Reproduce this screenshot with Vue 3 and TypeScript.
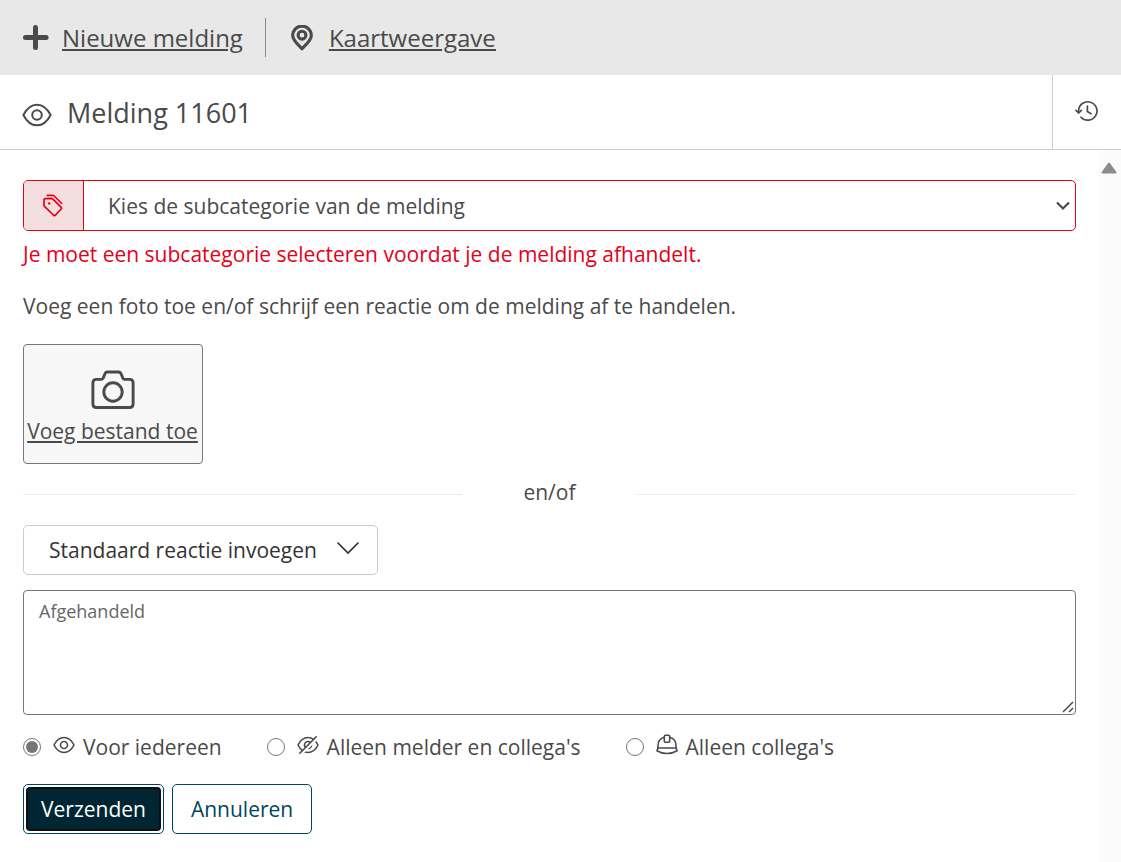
<script setup lang="ts">
import { ref } from 'vue'

type Audience = 'everyone' | 'reporter' | 'colleagues'

const audiences: { value: Audience; label: string }[] = [
  { value: 'everyone', label: 'Voor iedereen' },
  { value: 'reporter', label: "Alleen melder en collega's" },
  { value: 'colleagues', label: "Alleen collega's" },
]

const audience = ref<Audience>('everyone')
const subcategory = ref('')
const reply = ref('')
</script>

<template>
  <div class="page">
    <nav class="topbar">
      <a class="nav-link" href="#nieuw">
        <svg class="nav-icon" width="26" height="26" viewBox="0 0 26 26" aria-hidden="true">
          <path d="M12.500 2.500v20M2.500 12.500h20.600" stroke="currentColor" stroke-width="5" stroke-linecap="round" />
        </svg>
        <span class="nav-text">Nieuwe melding</span>
      </a>
      <a class="nav-link" href="#kaart">
        <svg class="nav-icon" width="22" height="26" viewBox="0 0 22 26" fill="none" stroke="currentColor" aria-hidden="true">
          <path d="M11 23.900C8.200 20.400 1.700 15.600 1.700 10.400a9.300 9.300 0 0 1 18.600 0c0 5.200-6.500 10-9.300 13.500Z" stroke-width="3.100" stroke-linejoin="round" />
          <circle cx="11" cy="10.200" r="3.900" stroke-width="3.100" />
        </svg>
        <span class="nav-text">Kaartweergave</span>
      </a>
    </nav>

    <header class="titlebar">
      <svg class="title-icon" width="30" height="24" viewBox="0 0 30 24" fill="none" stroke="currentColor" stroke-width="2" aria-hidden="true">
        <path d="M1.400 12C4.600 5.600 9.300 1.700 15 1.700S25.400 5.600 28.600 12C25.400 18.400 20.700 22.300 15 22.300S4.600 18.400 1.400 12Z" stroke-linejoin="round" />
        <circle cx="15" cy="12" r="4.800" />
      </svg>
      <h1>Melding 11601</h1>
      <button class="history" type="button" aria-label="Geschiedenis">
        <svg width="24" height="22" viewBox="0 0 24 22" fill="none" stroke="currentColor" stroke-width="1.700" stroke-linecap="round" stroke-linejoin="round" aria-hidden="true">
          <path d="M3.600 12.600V10.800A9.200 9.200 0 1 1 6 17.200" />
          <path d="M1 10.400 3.700 13 6.300 10.400" />
          <path d="M12.400 6V11.600L16 13.800" />
        </svg>
      </button>
    </header>

    <div class="scroller">
      <form class="content" @submit.prevent>
        <div class="category">
          <label class="category-icon" for="subcategory" aria-label="Subcategorie">
            <svg width="20" height="24" viewBox="0 0 20 24" fill="none" stroke="currentColor" stroke-width="1.700" stroke-linejoin="round" aria-hidden="true">
              <path d="M1 5.800Q1 4.600 2.200 4.600L8.200 4.400Q9.200 4.400 9.900 5.100L18 13.100Q19 14.200 18 15.300L12.600 21Q11.500 22 10.400 21L1.700 12.600Q1 11.900 1 10.900Z" />
              <path d="M4.300 1.300H9.500Q10.500 1.300 11.200 2L18.700 9.500" stroke-linecap="round" />
              <circle cx="6.200" cy="9.400" r="1.200" fill="currentColor" stroke="none" />
            </svg>
          </label>
          <select id="subcategory" v-model="subcategory">
            <option value="">Kies de subcategorie van de melding</option>
          </select>
          <svg class="category-chevron" width="14" height="10" viewBox="0 0 14 10" fill="none" stroke="#4a4a4a" stroke-width="2.200" aria-hidden="true">
            <path d="M1 1.500 7 7.500 13 1.500" />
          </svg>
        </div>
        <p class="error">Je moet een subcategorie selecteren voordat je de melding afhandelt.</p>
        <p class="intro">Voeg een foto toe en/of schrijf een reactie om de melding af te handelen.</p>

        <button class="upload" type="button">
          <svg width="44" height="40" viewBox="0 0 44 40" fill="none" stroke="currentColor" stroke-width="2.900" stroke-linejoin="round" aria-hidden="true">
            <path d="M5.400 9.400H10.500Q11.500 9.400 12 8.400L14.200 3.300Q14.900 2 16.300 2H27.700Q29.100 2 29.800 3.300L32 8.400Q32.500 9.400 33.500 9.400H38.600Q42.100 9.400 42.100 12.900V34Q42.100 37.500 38.600 37.500H5.400Q1.900 37.500 1.900 34V12.900Q1.900 9.400 5.400 9.400Z" />
            <circle cx="22" cy="22" r="9.200" />
          </svg>
          <span>Voeg bestand toe</span>
        </button>

        <div class="separator"><span>en/of</span></div>

        <button class="preset" type="button">
          Standaard reactie invoegen
          <svg width="24" height="14" viewBox="0 0 24 14" fill="none" stroke="currentColor" stroke-width="1.700" stroke-linecap="round" aria-hidden="true">
            <path d="M2 2 12 12 22 2" />
          </svg>
        </button>

        <div class="reply">
          <textarea v-model="reply" aria-label="Reactie" placeholder="Afgehandeld"></textarea>
          <svg class="grip" width="12" height="12" viewBox="0 0 12 12" stroke="#4a4a4a" stroke-width="1.500" aria-hidden="true">
            <path d="M1 11 11 1M7 11 11 7" />
          </svg>
        </div>

        <div class="audiences" role="radiogroup" aria-label="Zichtbaarheid">
          <label v-for="item in audiences" :key="item.value" class="audience">
            <input v-model="audience" type="radio" name="audience" :value="item.value" />
            <svg width="22" height="22" viewBox="0 0 22 22" fill="none" stroke="currentColor" stroke-width="1.600" stroke-linecap="round" stroke-linejoin="round" aria-hidden="true">
              <template v-if="item.value === 'colleagues'">
                <path d="M2 14V11.500C2 7.500 4.500 4.300 8.300 3.300M13.700 3.300C17.500 4.300 20 7.500 20 11.500V14" />
                <path d="M8.300 7.300V2.500Q8.300 1.200 9.600 1.200H12.400Q13.700 1.200 13.700 2.500V7.300Q13.700 8.200 12.800 8.200H9.200Q8.300 8.200 8.300 7.300Z" />
                <path d="M2 14H20L21.100 16.700C17.500 18.900 14.500 19.500 11 19.500S4.500 18.900 .900 16.700Z" />
              </template>
              <template v-else>
                <path d="M1 11C3.400 6.300 6.700 3.500 11 3.500S18.600 6.300 21 11C18.600 15.700 15.300 18.500 11 18.500S3.400 15.700 1 11Z" />
                <circle cx="11" cy="11" r="3.500" />
                <template v-if="item.value === 'reporter'">
                  <path d="M4 20.200 20.500 4" stroke="#fff" stroke-width="2.500" />
                  <path d="M2.800 19.200 19.200 2.800" />
                </template>
              </template>
            </svg>
            <span>{{ item.label }}</span>
          </label>
        </div>

        <div class="actions">
          <button class="submit" type="submit"><span>Verzenden</span></button>
          <button class="cancel" type="button">Annuleren</button>
        </div>
      </form>
      <div class="scrollbar" aria-hidden="true">
        <svg width="16" height="12" viewBox="0 0 16 12">
          <path d="M8 1.500 14.500 10.500H1.500Z" fill="#8b8b8b" stroke="#8b8b8b" stroke-width="2" stroke-linejoin="round" />
        </svg>
      </div>
    </div>
  </div>
</template>

<style>
body {
  margin: 0;
}
</style>

<style scoped>
.page {
  display: flex;
  flex-direction: column;
  min-height: 100vh;
  background: #fff;
  color: #4a4a4a;
  font-family: "Open Sans", "Noto Sans", sans-serif;
  font-size: 21px;
  line-height: 30px;
}

.page * {
  box-sizing: border-box;
}

button,
select,
textarea {
  margin: 0;
  color: inherit;
  font: inherit;
}

svg {
  flex: none;
}

.topbar {
  display: flex;
  align-items: center;
  height: 75px;
  padding: 0 23px;
  background: #e8e8e8;
}

.nav-link {
  display: flex;
  align-items: center;
  height: 39px;
  color: inherit;
  font-size: 24px;
}

.nav-link + .nav-link {
  margin-left: 22px;
  padding-left: 25px;
  border-left: 1px solid #8a8a8a;
}

.nav-link:first-child .nav-icon {
  margin-right: 13px;
}

.nav-link + .nav-link .nav-icon {
  margin-right: 16px;
}

.nav-text {
  text-decoration: underline;
}

.titlebar {
  display: flex;
  align-items: center;
  height: 75px;
  padding-left: 22px;
  border-bottom: 1px solid #ccc;
}

.title-icon {
  margin-top: 5px;
}

h1 {
  flex: 1;
  margin: 2px 0 0 15px;
  font-size: 27px;
  font-weight: 400;
  line-height: 36px;
}

.history {
  display: flex;
  align-items: center;
  justify-content: center;
  align-self: stretch;
  width: 69px;
  padding: 0 0 2px;
  border: 0;
  border-left: 1px solid #ccc;
  background: none;
}

.scroller {
  display: flex;
  flex: 1;
}

.content {
  flex: 1;
  min-width: 0;
  padding: 30px 22px 28px 23px;
}

.scrollbar {
  width: 23px;
  padding: 12px 0 0 3px;
  background: #fbfbfb;
  line-height: 0;
}

.category {
  position: relative;
  display: flex;
  height: 51px;
  border: 1px solid #e60017;
  border-radius: 5px;
  overflow: hidden;
}

.category-icon {
  display: flex;
  align-items: center;
  justify-content: center;
  width: 60px;
  padding-right: 1px;
  border-right: 1px solid #e60017;
  background: #f2dede;
  color: #e60017;
}

select {
  flex: 1;
  min-width: 0;
  padding: 0 40px 0 24px;
  border: 0;
  background: none;
  appearance: none;
}

.category-chevron {
  position: absolute;
  top: 20px;
  right: 5px;
  pointer-events: none;
}

p {
  margin: 0;
}

.error {
  margin-top: 8px;
  color: #e60017;
}

.intro {
  margin-top: 22px;
}

.upload {
  display: flex;
  flex-direction: column;
  align-items: center;
  width: 180px;
  height: 120px;
  margin-top: 23px;
  padding: 25px 1px 0 0;
  border: 1px solid #767676;
  border-radius: 4px;
  background: #f7f7f7;
  text-decoration: underline;
  white-space: nowrap;
}

.upload span {
  margin-top: 6px;
}

.separator {
  display: grid;
  grid-template-columns: 5fr 2fr 5fr;
  align-items: center;
  margin-top: 13px;
  text-align: center;
}

.separator::before,
.separator::after {
  height: 1px;
  margin-top: 4px;
  background: #ebebeb;
  content: "";
}

.preset {
  display: flex;
  align-items: center;
  gap: 19px;
  height: 50px;
  margin-top: 18px;
  padding: 0 17px 0 25px;
  border: 1px solid #ccc;
  border-radius: 5px;
  background: #fff;
  color: #333;
}

.preset svg {
  margin-bottom: 4px;
}

.reply {
  position: relative;
  display: flex;
  margin-top: 15px;
}

textarea {
  width: 100%;
  height: 125px;
  padding: 8px 15px;
  border: 1px solid #767676;
  border-radius: 4px;
  background: #fff;
  font-size: 18px;
  line-height: 24px;
  resize: none;
}

textarea::placeholder {
  color: #666;
  opacity: 1;
}

.grip {
  position: absolute;
  right: 2px;
  bottom: 2px;
}

.audiences {
  display: flex;
  flex-wrap: wrap;
  gap: 0 45px;
  margin-top: 17px;
}

.audience {
  display: flex;
  align-items: center;
}

.audience svg {
  margin: 0 8px 4px 12px;
}

input[type="radio"] {
  width: 18px;
  height: 18px;
  margin: 0;
  padding: 2px;
  border: 1px solid #767676;
  border-radius: 50%;
  background: #fff;
  appearance: none;
}

input[type="radio"]:checked {
  background: #767676 content-box;
}

.actions {
  display: flex;
  gap: 8px;
  margin-top: 22px;
}

.actions button {
  height: 50px;
  border: 1px solid #00455c;
  border-radius: 5px;
  background: #fff;
}

.actions .submit {
  padding: 2px;
  color: #fff;
}

.submit span {
  display: flex;
  align-items: center;
  height: 100%;
  padding: 0 13px;
  border: 2px solid #101010;
  border-radius: 4px;
  background: #002633;
}

.actions .cancel {
  padding: 0 18px;
  color: #00455c;
}
</style>
